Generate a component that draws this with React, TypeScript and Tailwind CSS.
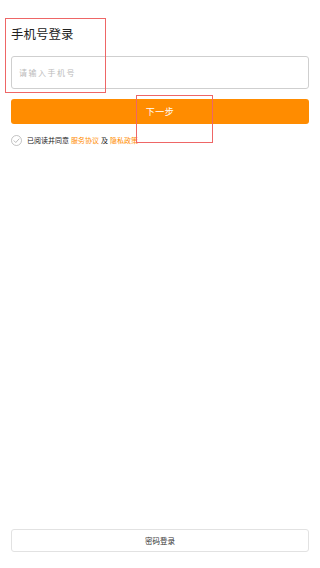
import React from "react";

export default function App() {
  return (
    <div className="relative flex min-h-[568px] w-[320px] flex-col bg-white px-[11px] font-['Noto_Sans_CJK_SC','Noto_Sans',sans-serif]">
      <h1 className="pt-[25px] text-[12.5px] leading-[18px] text-[#222]">手机号登录</h1>

      <input
        className="mt-[13px] h-[33px] w-full rounded-[3px] border border-[#cfcfcf] pl-[7px] text-[8px] tracking-[1.5px] outline-none placeholder:text-[#bbb]"
        placeholder="请输入手机号"
      />

      <button className="mt-[10px] h-[25px] w-full rounded-[3px] bg-[#ff8c00] text-[9px] tracking-[0.5px] text-white">
        下一步
      </button>

      <div className="mt-[10px] flex items-center text-[7px] leading-[12px] text-[#222]">
        <svg width="11" height="11" viewBox="0 0 22 22" fill="none" className="mr-[5px]">
          <circle cx="11" cy="11" r="10" stroke="#aaa" strokeWidth="1.4" />
          <path d="M6 11.5l3.5 3.5 6.5-7" stroke="#aaa" strokeWidth="1.6" strokeLinecap="round" strokeLinejoin="round" />
        </svg>
        <span>已阅读并同意</span>
        <span className="ml-[2px] text-[#ff8c00]">服务协议</span>
        <span className="ml-[2px]">及</span>
        <span className="ml-[2px] text-[#ff8c00]">隐私政策</span>
      </div>

      <button className="mb-[16px] mt-auto h-[23px] w-full rounded-[3px] border border-[#e2e2e2] text-[7.5px] text-[#333]">
        密码登录
      </button>

      {/* annotation boxes */}
      <div className="absolute left-[5px] top-[18px] h-[75px] w-[101px] border border-[#ee6666]" />
      <div className="absolute left-[136px] top-[95px] h-[48px] w-[77px] border border-[#ee6666]" />
    </div>
  );
}
